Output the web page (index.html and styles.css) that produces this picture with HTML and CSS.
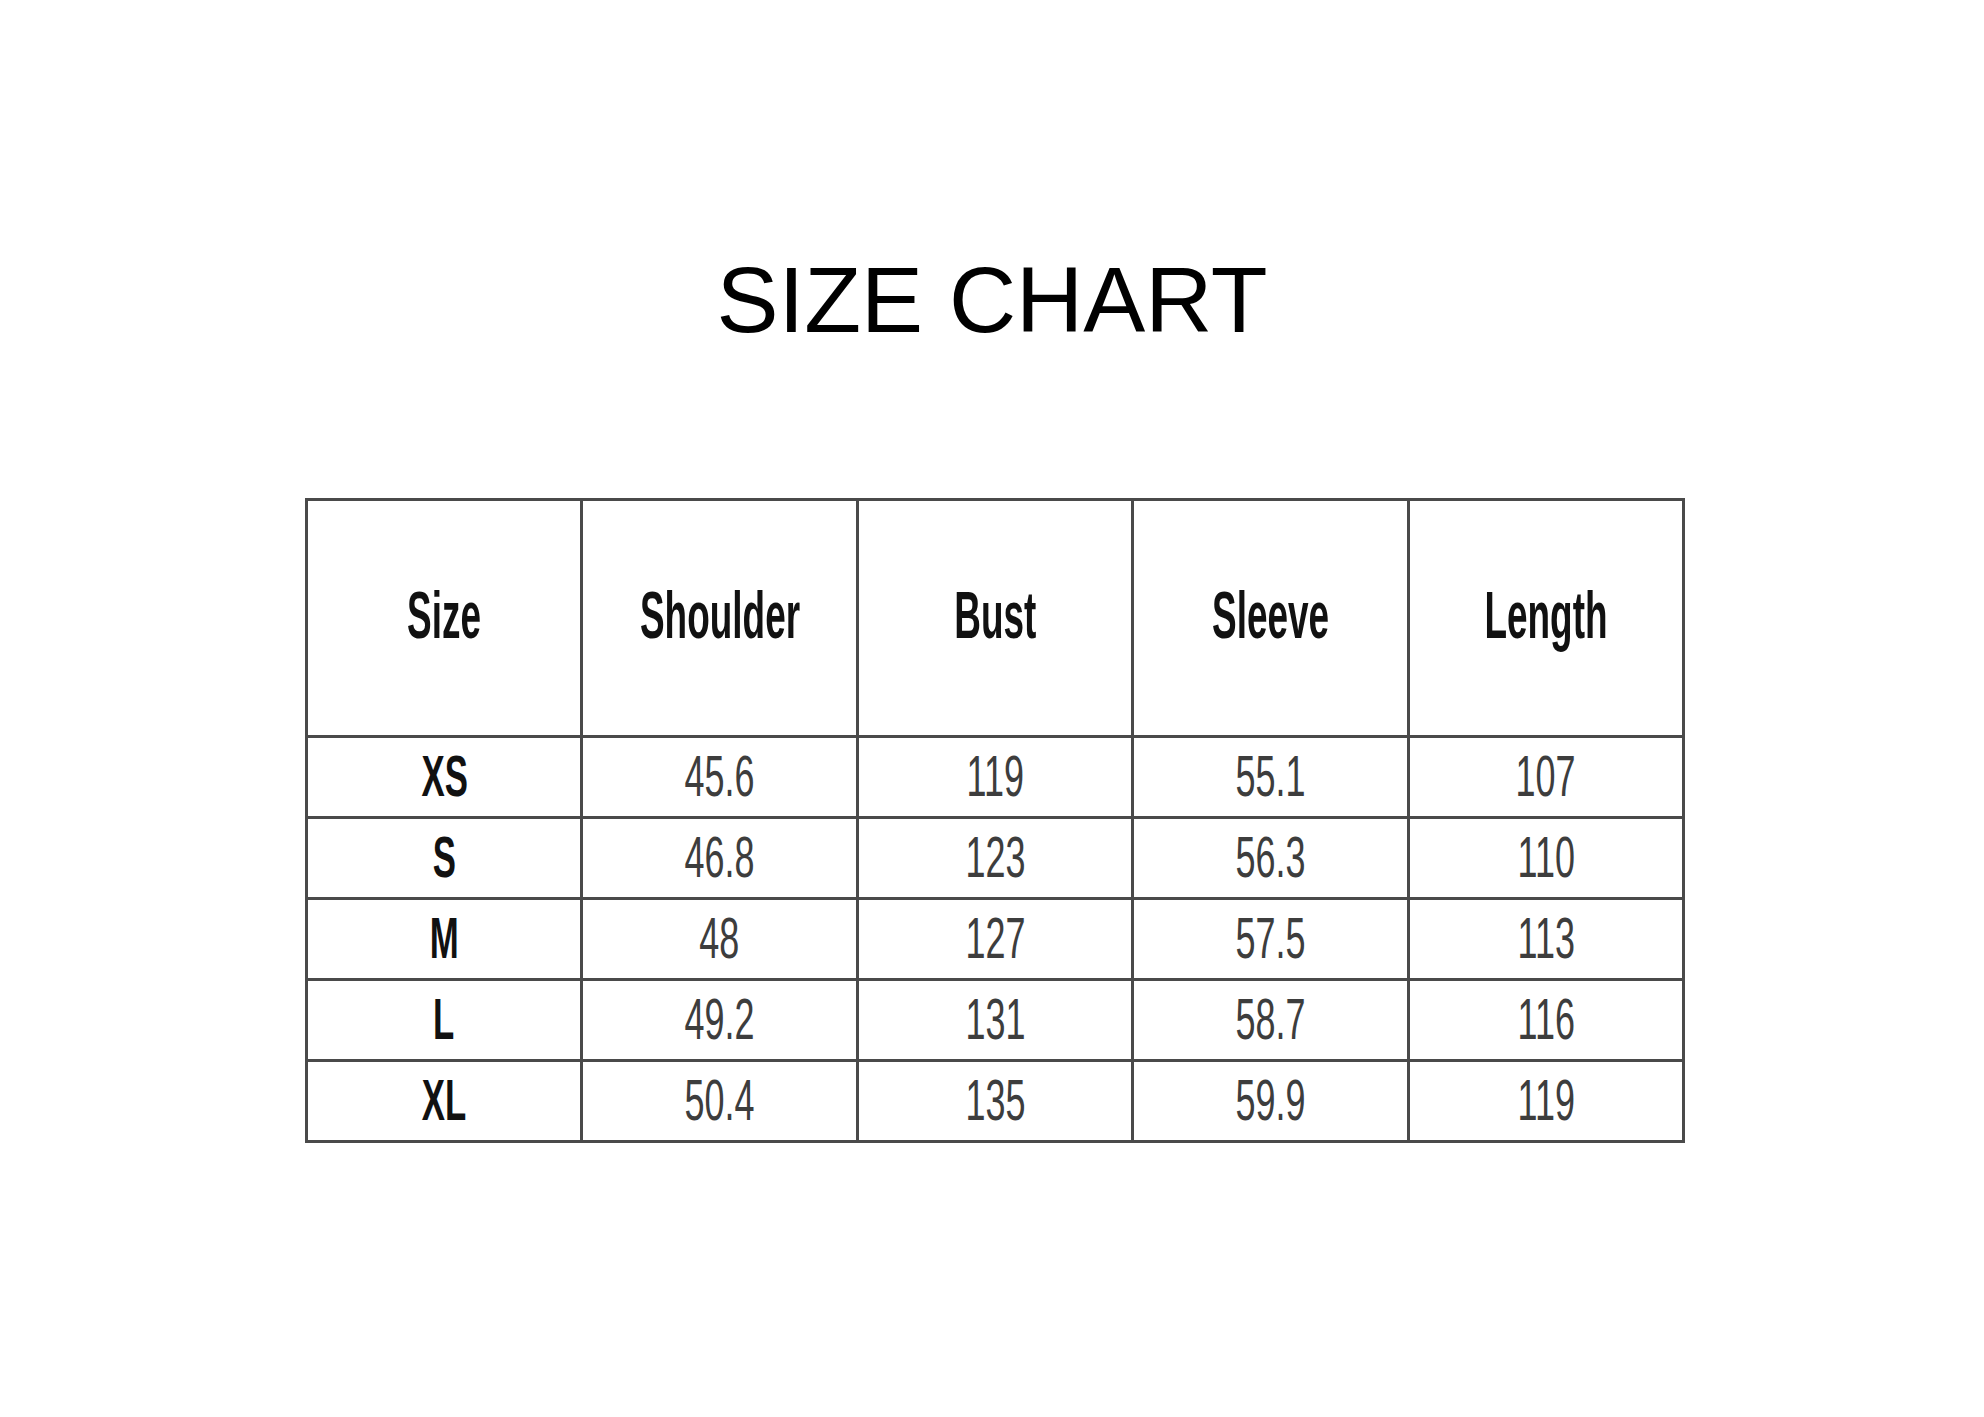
FILE: index.html
```html
<!DOCTYPE html>
<html lang="en">
<head>
<meta charset="utf-8">
<title>Size Chart</title>
<link rel="stylesheet" href="styles.css">
</head>
<body>
<main class="page">
  <h1 class="title">SIZE CHART</h1>
  <table class="chart">
    <thead>
      <tr>
        <th><span class="txt">Size</span></th>
        <th><span class="txt">Shoulder</span></th>
        <th><span class="txt">Bust</span></th>
        <th><span class="txt">Sleeve</span></th>
        <th><span class="txt">Length</span></th>
      </tr>
    </thead>
    <tbody>
      <tr><td class="sz"><span class="txt">XS</span></td><td><span class="txt">45.6</span></td><td><span class="txt">119</span></td><td><span class="txt">55.1</span></td><td><span class="txt">107</span></td></tr>
      <tr><td class="sz"><span class="txt">S</span></td><td><span class="txt">46.8</span></td><td><span class="txt">123</span></td><td><span class="txt">56.3</span></td><td><span class="txt">110</span></td></tr>
      <tr><td class="sz"><span class="txt">M</span></td><td><span class="txt">48</span></td><td><span class="txt">127</span></td><td><span class="txt">57.5</span></td><td><span class="txt">113</span></td></tr>
      <tr><td class="sz"><span class="txt">L</span></td><td><span class="txt">49.2</span></td><td><span class="txt">131</span></td><td><span class="txt">58.7</span></td><td><span class="txt">116</span></td></tr>
      <tr><td class="sz"><span class="txt">XL</span></td><td><span class="txt">50.4</span></td><td><span class="txt">135</span></td><td><span class="txt">59.9</span></td><td><span class="txt">119</span></td></tr>
    </tbody>
  </table>
</main>
</body>
</html>
```

FILE: styles.css
```css
html, body {
  margin: 0;
  padding: 0;
  background: #ffffff;
}

.page {
  width: 1984px;
  height: 1417px;
  display: flex;
  flex-direction: column;
  align-items: center;
  padding-top: 254px;
  box-sizing: border-box;
  font-family: "Liberation Sans", Arial, sans-serif;
}

.title {
  margin: 0;
  font-size: 93px;
  line-height: 93px;
  font-weight: 400;
  color: #000;
}

.chart {
  margin-top: 151px;
  margin-left: 6px;
  border-collapse: collapse;
  table-layout: fixed;
  width: 1380px;
}

.chart th,
.chart td {
  border: 3px solid #4a4a4a;
  padding: 0;
  text-align: center;
  vertical-align: middle;
}

.chart th {
  height: 234px;
  font-size: 66px;
  font-weight: 700;
  color: #111;
}

.chart td {
  height: 78px;
  font-size: 58px;
  font-weight: 400;
  color: #3d3d3d;
}

.chart td.sz {
  font-weight: 700;
  color: #111;
}

.txt {
  display: inline-block;
  margin: 0 -80px;
  line-height: 1;
  white-space: nowrap;
}

.chart th .txt {
  transform: translateY(-3px) scaleX(0.56);
}

.chart td .txt {
  transform: translateY(-2px) scaleX(0.62);
}

.chart td.sz .txt {
  transform: translateY(-2px) scaleX(0.6);
}
```
